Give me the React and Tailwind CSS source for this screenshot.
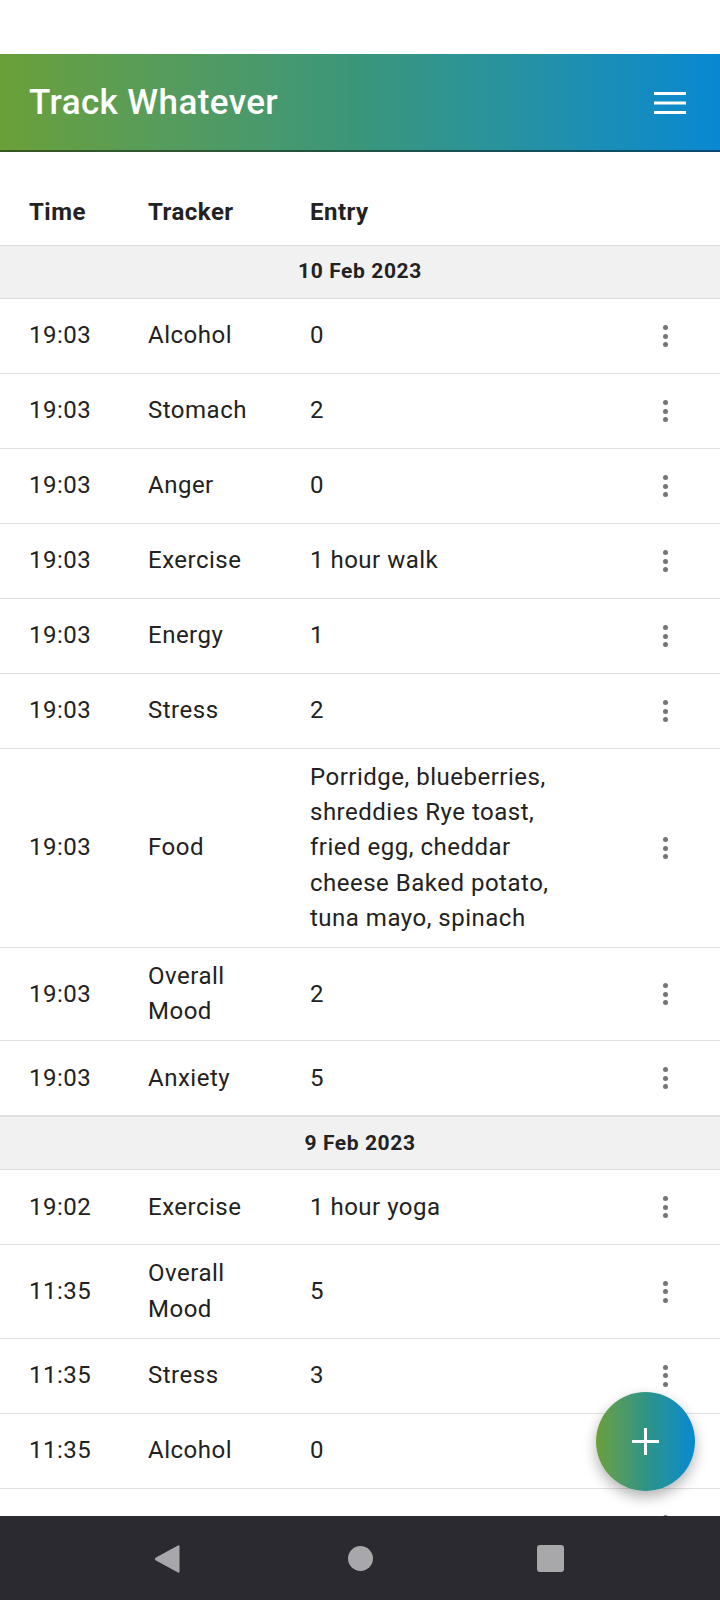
import React from "react";

const groups = [
  {
    date: "10 Feb 2023",
    rows: [
      ["19:03", "Alcohol", "0"],
      ["19:03", "Stomach", "2"],
      ["19:03", "Anger", "0"],
      ["19:03", "Exercise", "1 hour walk"],
      ["19:03", "Energy", "1"],
      ["19:03", "Stress", "2"],
      ["19:03", "Food", "Porridge, blueberries, shreddies Rye toast, fried egg, cheddar cheese Baked potato, tuna mayo, spinach"],
      ["19:03", "Overall Mood", "2"],
      ["19:03", "Anxiety", "5"],
    ],
  },
  {
    date: "9 Feb 2023",
    rows: [
      ["19:02", "Exercise", "1 hour yoga"],
      ["11:35", "Overall Mood", "5"],
      ["11:35", "Stress", "3"],
      ["11:35", "Alcohol", "0"],
      ["11:35", "Anxiety", "4"],
    ],
  },
];

function Dots() {
  return (
    <div className="w-[48px] mr-[31px] flex flex-col items-center gap-[3.5px]">
      <span className="block w-[5px] h-[5px] rounded-full bg-[#757575]" />
      <span className="block w-[5px] h-[5px] rounded-full bg-[#757575]" />
      <span className="block w-[5px] h-[5px] rounded-full bg-[#757575]" />
    </div>
  );
}

function Row({ r }) {
  return (
    <div className="flex items-center min-h-[75px] py-[11px] border-b border-[#e0e0e0] text-[24px] leading-[35.2px] tracking-[0.5px] text-[#222]">
      <div className="w-[148px] pl-[29px] shrink-0">{r[0]}</div>
      <div className="w-[162px] pr-[36px] shrink-0">{r[1]}</div>
      <div className="w-[250px] shrink-0">{r[2]}</div>
      <div className="flex-1" />
      <Dots />
    </div>
  );
}

export default function App() {
  return (
    <div
      className="relative w-[720px] h-[1600px] overflow-hidden bg-white"
      style={{ fontFamily: "Roboto, 'Noto Sans', sans-serif" }}
    >
      <div className="h-[54px] bg-white" />
      <header className="h-[98px] flex items-center justify-between pl-[29px] pr-[34px] bg-gradient-to-r from-[#6aa038] via-[#3a967a] to-[#0888d2] border-b-2 border-black/45">
        <h1 className="text-white text-[35px] font-medium leading-none tracking-[0.4px]">Track Whatever</h1>
        <svg width="32" height="22" viewBox="0 0 32 22" className="mt-[2px]">
          <rect x="0" y="0" width="32" height="3" fill="white" />
          <rect x="0" y="9.5" width="32" height="3" fill="white" />
          <rect x="0" y="19" width="32" height="3" fill="white" />
        </svg>
      </header>

      <div className="flex items-center pt-[42px] pb-[15px] text-[24px] leading-[36px] font-bold tracking-[0.5px] text-[#222]">
        <div className="w-[148px] pl-[29px]">Time</div>
        <div className="w-[162px]">Tracker</div>
        <div>Entry</div>
      </div>

      {groups.map((g) => (
        <div key={g.date}>
          <div className="h-[54px] flex items-center justify-center bg-[#f1f1f1] border-y border-[#dedede] text-[21px] font-bold tracking-[0.6px] text-[#222]">
            {g.date}
          </div>
          {g.rows.map((r, i) => (
            <Row key={i} r={r} />
          ))}
        </div>
      ))}

      <button className="absolute left-[596px] top-[1392px] w-[99px] h-[99px] rounded-full bg-gradient-to-r from-[#6aa038] via-[#2f9484] to-[#0888d2] shadow-[0_6px_14px_rgba(0,0,0,0.3)] flex items-center justify-center">
        <svg width="27" height="27" viewBox="0 0 27 27">
          <rect x="12" y="0" width="3" height="27" fill="white" />
          <rect x="0" y="12" width="27" height="3" fill="white" />
        </svg>
      </button>

      <nav className="absolute left-0 bottom-0 w-full h-[84px] bg-[#2b2a31] flex items-center">
        <div className="absolute left-[154px] top-[28px]">
          <svg width="26" height="30" viewBox="0 0 26 30">
            <path d="M24 1.5 Q25.5 0.8 25.5 2.5 L25.5 27.5 Q25.5 29.2 24 28.5 L1.5 16.2 Q0.2 15 1.5 13.8 Z" fill="#a8a8aa" />
          </svg>
        </div>
        <div className="absolute left-[348px] top-[30px] w-[25px] h-[25px] rounded-full bg-[#a8a8aa]" />
        <div className="absolute left-[537px] top-[29px] w-[27px] h-[27px] rounded-[3px] bg-[#a8a8aa]" />
      </nav>
    </div>
  );
}
